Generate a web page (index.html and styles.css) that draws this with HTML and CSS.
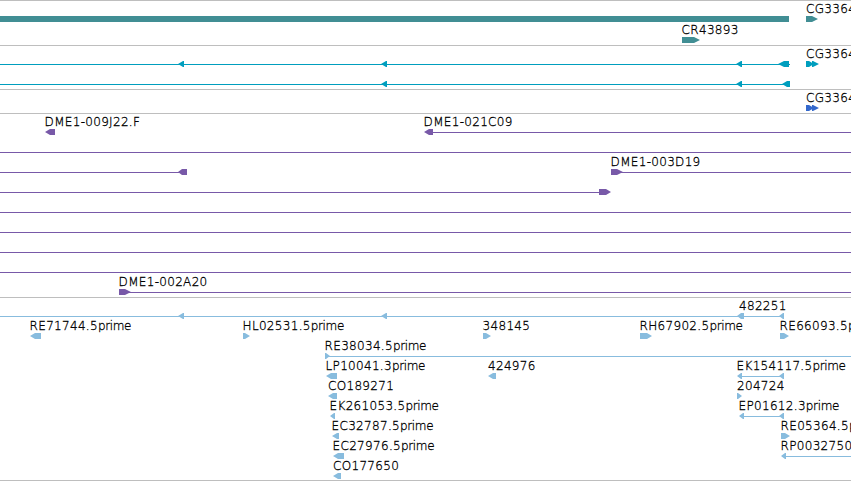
FILE: index.html
```html
<!DOCTYPE html>
<html lang="en">
<head>
    <meta charset="UTF-8">
    <meta name="viewport" content="width=device-width, initial-scale=1.0">
    <title>Genome Browser</title>
    <link rel="stylesheet" href="styles.css">
</head>
<body>
    <div class="browser">
        <!-- Genes -->
        <section class="track gene">
            <svg viewBox="0 1 851 44" width="851" height="44">
                <path d="M0 16H789V22H0Z"/>
                <path d="M806 16h6l6 3l-6 3h-6z"/>
                <path d="M682 37h12l6 3l-6 3h-12z"/>
                <text x="806" y="13">CG3364</text>
                <text x="681.6" y="34">CR43893</text>
            </svg>
        </section>

        <!-- Transcripts -->
        <section class="track transcript">
            <svg viewBox="0 46 851 43" width="851" height="43">
                <path d="M0 64H790V65H0Z M0 84H790V85H0Z"/>
                <path d="M178 64l5-3h1v6h-1z M381 64l5-3h1v6h-1z M736 64l5-3h1v6h-1z M778 64l6-3h5v6h-5z"/>
                <path d="M381 84l5-3h1v6h-1z M736 84l5-3h1v6h-1z M782 84l5-3h3v6h-3z"/>
                <path d="M806 61h3l5 3l-5 3h-3z M812 61h1l6 3l-6 3h-1z"/>
                <text x="806" y="58">CG3364</text>
            </svg>
        </section>

        <!-- Coding sequences -->
        <section class="track cds">
            <svg viewBox="0 90 851 23" width="851" height="23">
                <path d="M806 105h3l5 3l-5 3h-3z M812 105h1l6 3l-6 3h-1z"/>
                <text x="806" y="102">CG3364</text>
            </svg>
        </section>

        <!-- BAC ends -->
        <section class="track bac">
            <svg viewBox="0 114 851 183" width="851" height="183">
                <path d="M430 132H851V133H430Z M0 152H851V153H0Z M0 172H180V173H0Z M620 172H851V173H620Z M0 192H600V193H0Z"/>
                <path d="M0 212H851V213H0Z M0 232H851V233H0Z M0 252H851V253H0Z M0 272H851V273H0Z M128 292H851V293H128Z"/>
                <path d="M45 132l5-3h5v6h-5z M424 132l5-3h4v6h-4z M178 172l4-3h5v6h-5z"/>
                <path d="M611 169h6l6 3l-6 3h-6z M599 189h7l5 3l-5 3h-7z M119 289h6l6 3l-6 3h-6z"/>
                <text x="44.6" y="126">DME1-009J22.F</text>
                <text x="423.6" y="126">DME1-021C09</text>
                <text x="610.6" y="166">DME1-003D19</text>
                <text x="118.6" y="286">DME1-002A20</text>
            </svg>
        </section>

        <!-- ESTs -->
        <section class="track est">
            <svg viewBox="0 298 851 182" width="851" height="182">
                <path d="M0 316H784V317H0Z M326 356H851V357H326Z M738 376H784V377H738Z M740 416H784V417H740Z M782 456H851V457H782Z"/>
                <path d="M178 316l5-3h1v6h-1z M381 316l5-3h1v6h-1z M737 316l4-3h3v6h-3z M779 316l4-3h1v6h-1z"/>
                <path d="M30 336l5-3h6v6h-6z M243 333h2l5 3l-5 3h-2z M483 333h3l5 3l-5 3h-3z M640 333h7l5 3l-5 3h-7z M780 333h4l5 3l-5 3h-4z"/>
                <path d="M325 353h1l4 3l-4 3h-1z M326 376l5-3h6v6h-6z M488 376l5-3h3v6h-3z M737 376l4-3h1v6h-1z M779 376l4-3h1v6h-1z"/>
                <path d="M328 396l5-3h4v6h-4z M737 393h1l4 3l-4 3h-1z"/>
                <path d="M330 416l4-3h1v6h-1z M739 416l4-3h1v6h-1z M779 416l4-3h1v6h-1z"/>
                <path d="M332 436l5-3h2v6h-2z M781 433h4l5 3l-5 3h-4z"/>
                <path d="M333 456l5-3h6v6h-6z M781 456l4-3h1v6h-1z M333 476l5-3h3v6h-3z"/>
                <text x="739" y="310">482251</text>
                <text x="29.6" y="330">RE71744.5<tspan>prime</tspan></text>
                <text x="242.6" y="330">HL02531.5<tspan>prime</tspan></text>
                <text x="482.6" y="330">348145</text>
                <text x="639.6" y="330">RH67902.5<tspan>prime</tspan></text>
                <text x="779.6" y="330">RE66093.5<tspan>prime</tspan></text>
                <text x="324.6" y="350">RE38034.5<tspan>prime</tspan></text>
                <text x="325.6" y="370">LP10041.3<tspan>prime</tspan></text>
                <text x="488" y="370">424976</text>
                <text x="736.6" y="370">EK154117.5<tspan>prime</tspan></text>
                <text x="328" y="390">CO189271</text>
                <text x="737" y="390">204724</text>
                <text x="329.6" y="410">EK261053.5<tspan>prime</tspan></text>
                <text x="738.6" y="410">EP01612.3<tspan>prime</tspan></text>
                <text x="331.6" y="430">EC32787.5<tspan>prime</tspan></text>
                <text x="780.6" y="430">RE05364.5<tspan>prime</tspan></text>
                <text x="332.6" y="450">EC27976.5<tspan>prime</tspan></text>
                <text x="780.6" y="450">RP0032750</text>
                <text x="333" y="470">CO177650</text>
            </svg>
        </section>
    </div>
</body>
</html>
```
FILE: styles.css
```css
body {
    margin: 0;
    background: #fff;
    overflow: hidden;
}
.browser {
    width: 851px;
    border-bottom: 1px solid #bebebe;
}
.track {
    border-top: 1px solid #bebebe;
}
.track svg {
    display: block;
}
.gene {
    fill: #418e94;
}
.transcript {
    fill: #009ebe;
}
.cds {
    fill: #3468cc;
}
.bac {
    fill: #7859a8;
}
.est {
    fill: #88bcde;
}
text {
    font-family: "DejaVu Sans Light", "DejaVu Sans", sans-serif;
    font-size: 12px;
    font-weight: 200;
    letter-spacing: 0.31px;
    fill: #000;
    stroke: #000;
    stroke-width: 0.3px;
}
tspan {
    letter-spacing: -0.35px;
}
```
